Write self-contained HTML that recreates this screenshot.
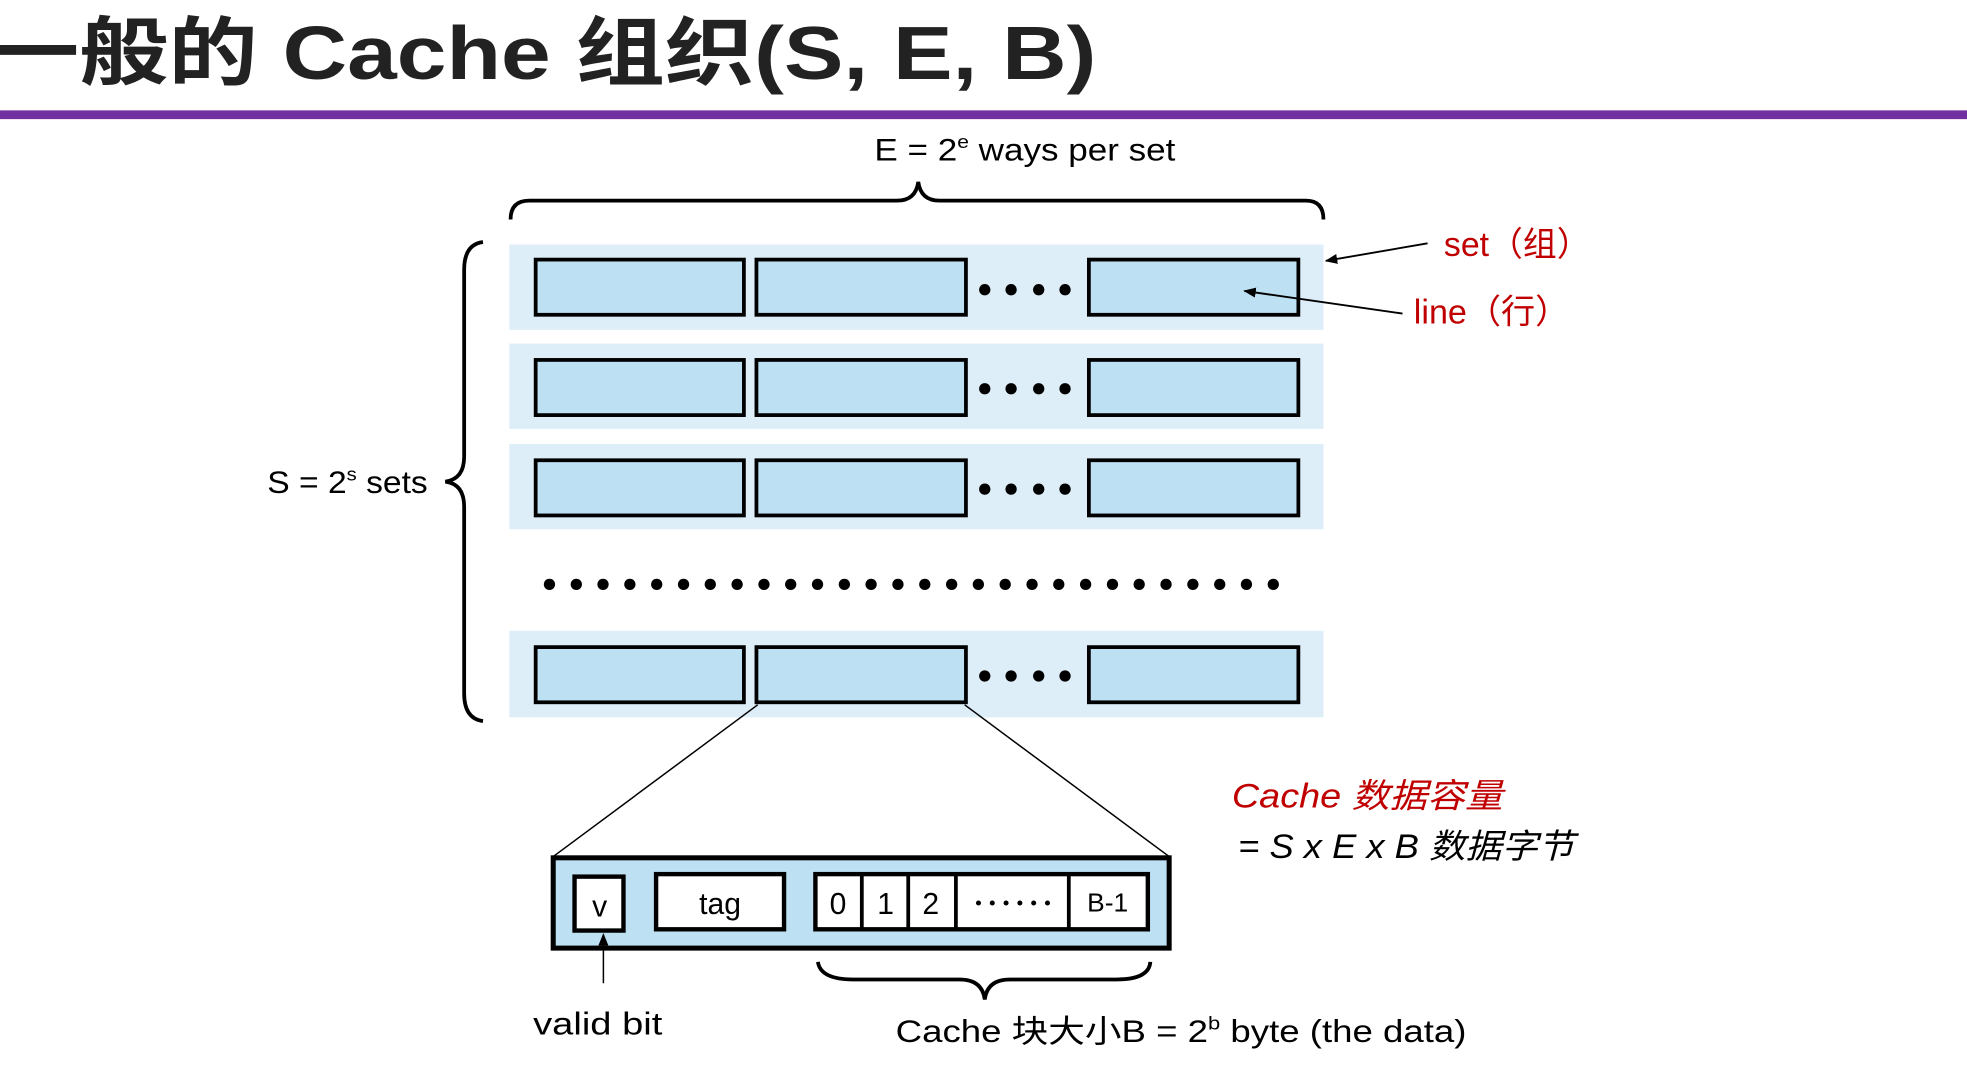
<!DOCTYPE html>
<html><head><meta charset="utf-8"><style>
html,body{margin:0;padding:0;background:#fff;overflow:hidden}
svg{display:block}
text{font-family:"Liberation Sans","Noto Sans CJK SC",sans-serif}
</style></head><body>
<svg width="1967" height="1066" viewBox="0 0 1568 850" preserveAspectRatio="none">
<defs><marker id="ar" markerWidth="10" markerHeight="8" refX="9" refY="4" orient="auto" markerUnits="userSpaceOnUse"><path d="M0,0 L10,4 L0,8 z" fill="#000"/></marker></defs>
<text x="-8" y="63" font-size="60" font-weight="bold" fill="#222" textLength="882" lengthAdjust="spacingAndGlyphs">一般的 Cache 组织(S, E, B)</text>
<rect x="0" y="88" width="1568" height="7" fill="#7030a0"/>
<text x="697" y="128" font-size="25" fill="#000" textLength="240" lengthAdjust="spacingAndGlyphs">E = 2<tspan font-size="15" dy="-10">e</tspan><tspan dy="10"> ways per set</tspan></text>
<path d="M407,175 Q407,160 422,160 L715,160 Q730,160 732,145 Q734,160 749,160 L1041,160 Q1055,160 1055,175" fill="none" stroke="#000" stroke-width="3"/>
<g fill="#ddeef8"><rect x="406" y="195" width="649" height="68"/><rect x="406" y="274" width="649" height="68"/><rect x="406" y="354" width="649" height="68"/><rect x="406" y="503" width="649" height="69"/></g>
<g fill="#bde0f3" stroke="#000" stroke-width="3">
<rect x="427" y="207" width="166" height="44"/><rect x="603" y="207" width="167" height="44"/><rect x="868" y="207" width="167" height="44"/>
<rect x="427" y="287" width="166" height="44"/><rect x="603" y="287" width="167" height="44"/><rect x="868" y="287" width="167" height="44"/>
<rect x="427" y="367" width="166" height="44"/><rect x="603" y="367" width="167" height="44"/><rect x="868" y="367" width="167" height="44"/>
<rect x="427" y="516" width="166" height="44"/><rect x="603" y="516" width="167" height="44"/><rect x="868" y="516" width="167" height="44"/>
</g>
<g fill="#000">
<circle cx="785" cy="231" r="4.5"/><circle cx="806" cy="231" r="4.5"/><circle cx="828" cy="231" r="4.5"/><circle cx="849" cy="231" r="4.5"/>
<circle cx="785" cy="310" r="4.5"/><circle cx="806" cy="310" r="4.5"/><circle cx="828" cy="310" r="4.5"/><circle cx="849" cy="310" r="4.5"/>
<circle cx="785" cy="390" r="4.5"/><circle cx="806" cy="390" r="4.5"/><circle cx="828" cy="390" r="4.5"/><circle cx="849" cy="390" r="4.5"/>
<circle cx="785" cy="539" r="4.5"/><circle cx="806" cy="539" r="4.5"/><circle cx="828" cy="539" r="4.5"/><circle cx="849" cy="539" r="4.5"/>
</g>
<g fill="#000" id="row"></g>
<path d="M385,193 Q370,195 370,215 L370,364 Q370,382 355,384 Q370,386 370,404 L370,553 Q370,573 385,575" fill="none" stroke="#000" stroke-width="3"/>
<text x="213" y="393" font-size="25" fill="#000" textLength="128" lengthAdjust="spacingAndGlyphs">S = 2<tspan font-size="15" dy="-10">s</tspan><tspan dy="10"> sets</tspan></text>
<line x1="1138" y1="194" x2="1057" y2="208" stroke="#000" stroke-width="1.5" marker-end="url(#ar)"/>
<text x="1151" y="204" font-size="27" fill="#c00000" textLength="117" lengthAdjust="spacingAndGlyphs">set（组）</text>
<line x1="1118" y1="250" x2="992" y2="232" stroke="#000" stroke-width="1.5" marker-end="url(#ar)"/>
<text x="1127" y="258" font-size="27" fill="#c00000" textLength="124" lengthAdjust="spacingAndGlyphs">line（行）</text>
<line x1="604" y1="562" x2="441" y2="683" stroke="#000" stroke-width="1.2"/>
<line x1="769" y1="562" x2="932" y2="683" stroke="#000" stroke-width="1.2"/>
<rect x="441" y="684" width="491" height="72" fill="#bde0f3" stroke="#000" stroke-width="4"/>
<g fill="#fff" stroke="#000" stroke-width="3.5">
<rect x="458" y="699" width="39" height="43"/><rect x="523" y="697" width="102" height="44"/><rect x="650" y="697" width="265" height="44"/>
</g>
<g stroke="#000" stroke-width="3"><line x1="687" y1="697" x2="687" y2="741"/><line x1="724" y1="697" x2="724" y2="741"/><line x1="762" y1="697" x2="762" y2="741"/><line x1="852" y1="697" x2="852" y2="741"/></g>
<g font-size="24" fill="#000" text-anchor="middle">
<text x="478" y="731">v</text><text x="574" y="729">tag</text><text x="668" y="729">0</text><text x="706" y="729">1</text><text x="742" y="729">2</text><text x="883" y="727" font-size="21">B-1</text>
</g>
<g fill="#000"><circle cx="780" cy="720" r="2"/><circle cx="791" cy="720" r="2"/><circle cx="802" cy="720" r="2"/><circle cx="813" cy="720" r="2"/><circle cx="824" cy="720" r="2"/><circle cx="835" cy="720" r="2"/></g>
<line x1="481" y1="784" x2="481" y2="745" stroke="#000" stroke-width="1.2" marker-end="url(#ar)"/>
<text x="425" y="825" font-size="25" fill="#000" textLength="103" lengthAdjust="spacingAndGlyphs">valid bit</text>
<path d="M652,767 Q654,781 680,781 L765,781 Q783,781 785,797 Q787,781 805,781 L890,781 Q916,781 917,767" fill="none" stroke="#000" stroke-width="3"/>
<text x="714" y="831" font-size="25" fill="#000" textLength="455" lengthAdjust="spacingAndGlyphs">Cache 块大小B = 2<tspan font-size="15" dy="-10">b</tspan><tspan dy="10"> byte (the data)</tspan></text>
<text x="982" y="644" font-size="27" font-style="italic" fill="#c00000" textLength="216" lengthAdjust="spacingAndGlyphs">Cache 数据容量</text>
<text x="987" y="684" font-size="27" font-style="italic" fill="#000" textLength="268" lengthAdjust="spacingAndGlyphs">= S x E x B 数据字节</text>
<g fill="#000">
<circle cx="438" cy="466" r="4.5"/><circle cx="459.4" cy="466" r="4.5"/><circle cx="480.7" cy="466" r="4.5"/><circle cx="502.1" cy="466" r="4.5"/><circle cx="523.5" cy="466" r="4.5"/><circle cx="544.9" cy="466" r="4.5"/><circle cx="566.2" cy="466" r="4.5"/><circle cx="587.6" cy="466" r="4.5"/><circle cx="609" cy="466" r="4.5"/><circle cx="630.3" cy="466" r="4.5"/><circle cx="651.7" cy="466" r="4.5"/><circle cx="673.1" cy="466" r="4.5"/><circle cx="694.4" cy="466" r="4.5"/><circle cx="715.8" cy="466" r="4.5"/><circle cx="737.2" cy="466" r="4.5"/><circle cx="758.6" cy="466" r="4.5"/><circle cx="779.9" cy="466" r="4.5"/><circle cx="801.3" cy="466" r="4.5"/><circle cx="822.7" cy="466" r="4.5"/><circle cx="844" cy="466" r="4.5"/><circle cx="865.4" cy="466" r="4.5"/><circle cx="886.8" cy="466" r="4.5"/><circle cx="908.1" cy="466" r="4.5"/><circle cx="929.5" cy="466" r="4.5"/><circle cx="950.9" cy="466" r="4.5"/><circle cx="972.3" cy="466" r="4.5"/><circle cx="993.6" cy="466" r="4.5"/><circle cx="1015" cy="466" r="4.5"/>
</g>
</svg>
</body></html>
